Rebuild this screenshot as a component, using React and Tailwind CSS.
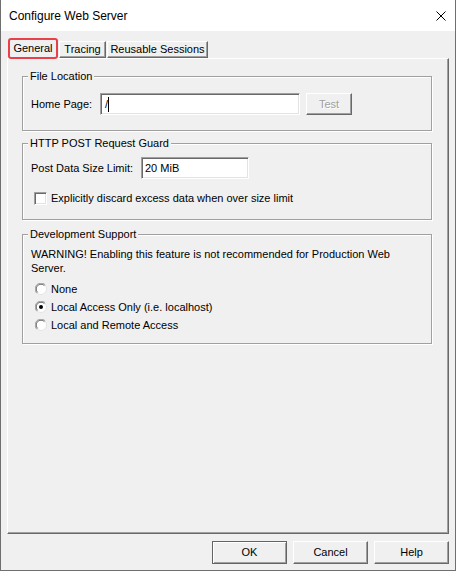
import React from 'react'

const raised = 'border-t border-l border-t-white border-l-white border-r border-b border-r-[#696969] border-b-[#696969] shadow-[inset_-1px_-1px_0_#a0a0a0]'
const sunken = 'border-t border-l border-t-[#a0a0a0] border-l-[#a0a0a0] border-r border-b border-r-white border-b-white shadow-[inset_1px_1px_0_#696969,inset_-1px_-1px_0_#e3e3e3]'

function Group({ title, className, children }) {
  return (
    <fieldset className={`w-[410px] border border-[#a0a0a0] shadow-[inset_1px_1px_0_#fff,1px_1px_0_#fff] ${className}`}>
      <legend className="ml-[5px] px-[2px] leading-[13px] bg-[#f0f0f0]">{title}</legend>
      {children}
    </fieldset>
  )
}

function Radio({ checked, label }) {
  return (
    <div className="flex items-center h-[18px] pl-[12px] gap-[4px]">
      <svg width="12" height="12" viewBox="0 0 12 12">
        <circle cx="6" cy="6" r="5.5" fill="#fff" stroke="#e3e3e3" />
        <path d="M1.8 10.2 A5.5 5.5 0 0 1 10.2 1.8" fill="none" stroke="#a0a0a0" />
        <path d="M2.6 9.4 A4.5 4.5 0 0 1 9.4 2.6" fill="none" stroke="#696969" />
        {checked && <circle cx="6" cy="6" r="2" fill="#000" />}
      </svg>
      <span className="leading-[13px]">{label}</span>
    </div>
  )
}

function Tab({ label, selected, className }) {
  if (selected) {
    return (
      <div className={`relative z-10 -mb-px h-[21px] flex items-center justify-center bg-[#f0f0f0] border-2 border-[#e8414b] rounded-[3px] ${className}`}>
        {label}
      </div>
    )
  }
  return (
    <div className={`h-[17px] flex items-center justify-center ${raised} ${className}`}>
      {label}
    </div>
  )
}

export default function App() {
  return (
    <div className="w-[456px] h-[571px] flex flex-col bg-[#f0f0f0] border-x border-b border-[#6f6f6f] text-[11px] text-black font-['Liberation_Sans',Arial,sans-serif]">
      <div className="h-[31px] shrink-0 bg-white flex items-center justify-between pl-[8px] pr-[9px]">
        <span className="text-[12px]">Configure Web Server</span>
        <svg width="10" height="10" viewBox="0 0 10 10">
          <path d="M0.5 0.5 L9.5 9.5 M9.5 0.5 L0.5 9.5" stroke="#000" strokeWidth="1" />
        </svg>
      </div>

      <div className="flex-1 flex flex-col pt-[7px] px-[6px]">
        <div className="h-[20px] flex items-end">
          <Tab label="General" selected className="ml-[1px] w-[50px]" />
          <Tab label="Tracing" className="ml-[1px] w-[47px]" />
          <Tab label="Reusable Sessions" className="ml-[1px] w-[101px]" />
        </div>

        <div className={`h-[476px] w-[442px] pt-[11px] pl-[14px] ${raised}`}>
          <Group title="File Location">
            <div className="flex items-center pt-[10px] pb-[15px] pl-[8px]">
              <span className="w-[69px]">Home Page:</span>
              <div className={`w-[200px] h-[22px] bg-white flex items-center pl-[4px] ${sunken}`}>
                <span>/</span>
                <span className="w-px h-[15px] bg-black"></span>
              </div>
              <div className={`ml-[6px] w-[46px] h-[22px] flex items-center justify-center text-[#a0a0a0] [text-shadow:1px_1px_0_#fff] ${raised}`}>
                Test
              </div>
            </div>
          </Group>

          <Group title="HTTP POST Request Guard" className="mt-[6px]">
            <div className="flex items-center pt-[7px] pl-[8px]">
              <span className="w-[110px]">Post Data Size Limit:</span>
              <div className={`w-[108px] h-[22px] bg-white flex items-start pt-[2px] pl-[3px] ${sunken}`}>
                20 MiB
              </div>
            </div>
            <div className="flex items-center h-[13px] mt-[13px] mb-[14px] pl-[11px] gap-[4px]">
              <div className={`w-[13px] h-[13px] bg-white ${sunken}`}></div>
              <span className="leading-[13px]">Explicitly discard excess data when over size limit</span>
            </div>
          </Group>

          <Group title="Development Support" className="mt-[8px]">
            <p className="pt-[6px] pl-[8px] leading-[14px]">
              WARNING! Enabling this feature is not recommended for Production Web<br />Server.
            </p>
            <div className="mt-[5px] pb-[9px]">
              <Radio label="None" />
              <Radio label="Local Access Only (i.e. localhost)" checked />
              <Radio label="Local and Remote Access" />
            </div>
          </Group>
        </div>

        <div className="flex justify-end gap-[6px] mt-[7px]">
          <div className="w-[75px] h-[23px] flex items-center justify-center border border-[#646464] shadow-[inset_1px_1px_0_#fff,inset_-1px_-1px_0_#a0a0a0]">OK</div>
          <div className={`w-[75px] h-[23px] flex items-center justify-center ${raised}`}>Cancel</div>
          <div className={`w-[75px] h-[23px] flex items-center justify-center ${raised}`}>Help</div>
        </div>
      </div>
    </div>
  )
}
